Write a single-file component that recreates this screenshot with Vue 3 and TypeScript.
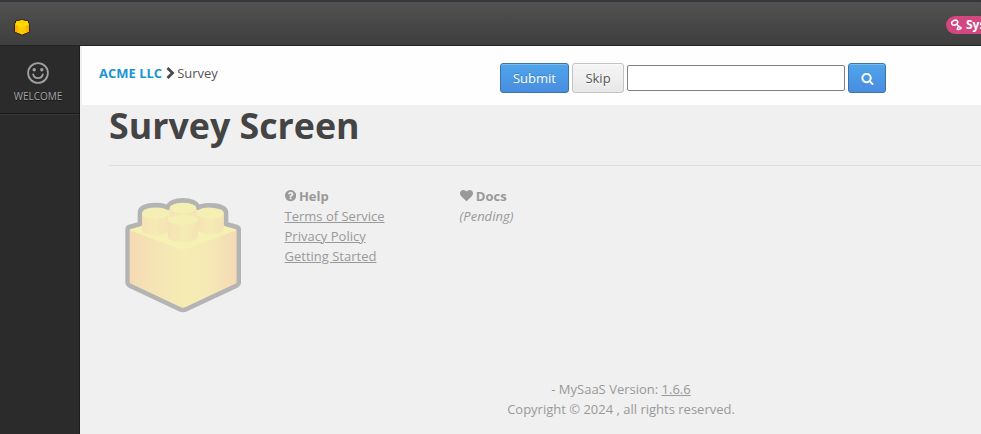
<script setup lang="ts">
import { ref } from 'vue'

const query = ref('')
const helpLinks: string[] = ['Terms of Service', 'Privacy Policy', 'Getting Started']
const studs: number[][] = [
  [219, 69, 40, 32],
  [135, 86, 39, 50],
  [302, 86, 39, 46],
  [219, 105, 45, 51],
]
</script>

<template>
  <div class="app">
    <header class="topbar">
      <svg class="logo" viewBox="0 0 16 17">
        <path d="M.5 4.500 1.500 4V1.800L5 1.200 8 .6l3 .6 3.500.6V4l1 .5v8.300L8 16.200.5 12.800Z" fill="#ffc800" stroke="#2b2516" stroke-width="1" />
        <path d="M1 5 8 8.400 15 5l-2-1-5 1.800L3 4Z" fill="#ffe400" />
        <path d="M1 5.500 4 7v7L1 12.500Z" fill="#ffb000" />
        <path d="m15 5.500-3 1.500v7l3-1.500Z" fill="#ffb000" />
        <path d="M2.200 2.500h3.300v3H2.200ZM6.300 4h3.400v3H6.300ZM10.500 2.500h3.300v3h-3.300ZM6.700 1.300h2.600v1.800H6.700Z" fill="#ffd900" />
      </svg>
      <div class="badge">
        <svg viewBox="0 0 12 12">
          <ellipse cx="3.700" cy="3.700" rx="3.100" ry="2.300" transform="rotate(-25 3.700 3.700)" />
          <path d="m5.500 5.300 5.300 4.200M7.500 7 6.300 10.200l1.600.7M9.500 8.500l-.8 2.200" />
        </svg>
        <span>Sys</span>
      </div>
    </header>
    <div class="body">
      <nav class="sidebar">
        <a class="nav-item">
          <svg viewBox="0 0 22 22">
            <circle class="line" cx="11" cy="11" r="9.900" />
            <circle cx="7.200" cy="7.800" r="1.700" />
            <circle cx="14.800" cy="7.800" r="1.700" />
            <path class="line" d="M6.200 12.500c1 4.700 8.600 4.700 9.600 0" />
          </svg>
          <span>WELCOME</span>
        </a>
      </nav>
      <main class="content">
        <div class="toolbar">
          <div class="crumbs">
            <a>ACME LLC</a>
            <svg viewBox="0 0 9 12"><path d="m1.500 1 5 5-5 5" /></svg>
            <span>Survey</span>
          </div>
          <form class="actions" @submit.prevent>
            <button class="btn primary">Submit</button>
            <button class="btn" type="button">Skip</button>
            <input v-model="query" type="text" />
            <button class="btn primary search" type="button" aria-label="Search">
              <svg viewBox="0 0 1792 1792"><path d="M1216 832q0-185-131.500-316.500t-316.500-131.500-316.500 131.500-131.500 316.500 131.500 316.500 316.500 131.500 316.500-131.500 131.500-316.500zm512 832q0 52-38 90t-90 38q-54 0-90-38l-343-342q-179 124-399 124-143 0-273.500-55.500t-225-150-150-225-55.500-273.500 55.500-273.500 150-225 225-150 273.500-55.500 273.500 55.500 225 150 150 225 55.500 273.500q0 220-124 399l343 343q37 37 37 90z" /></svg>
            </button>
          </form>
        </div>
        <h1>Survey Screen</h1>
        <div class="columns">
          <svg class="brick" viewBox="45 36 348 348">
            <defs>
              <linearGradient id="side" x1="0" x2="1">
                <stop offset="0" stop-color="#f5dab4" />
                <stop offset=".3" stop-color="#f5e6b5" />
                <stop offset=".5" stop-color="#f5ecb3" />
                <stop offset=".75" stop-color="#f5e8b5" />
                <stop offset="1" stop-color="#f5dab6" />
              </linearGradient>
              <linearGradient id="stud" x1="0" x2="1">
                <stop offset="0" stop-color="#f5e2b4" />
                <stop offset=".5" stop-color="#f5ebb4" />
                <stop offset="1" stop-color="#f5e2b4" />
              </linearGradient>
            </defs>
            <path d="M53 133q0-5 5-7l32-9V83c0-25 62-28 85-15 0-29 88-29 88 0 23-13 85-8 85 15v34l32 9q6 2 6 7v160q0 5-5 8l-151 71q-11 6-22 0L58 301q-5-3-5-8Z" fill="#f5ecb4" stroke="#b4b4b4" stroke-width="14" stroke-linejoin="round" />
            <path d="M59 136 219 188l160-52v157L228 363q-9 5-18 0L59 293Z" fill="url(#side)" />
            <path d="m59 136 40-13h240l40 13-148 55q-12 5-24 0Z" fill="#f4f1b3" />
            <g v-for="(s, i) in studs" :key="i">
              <path :d="`M${s[0] - s[2]} ${s[1]}v${s[3]}a${s[2]} 15 0 0 0 ${s[2] * 2} 0v${-s[3]}Z`" fill="url(#stud)" />
              <ellipse :cx="s[0]" :cy="s[1]" :rx="s[2]" ry="15" fill="#f4f0b4" />
            </g>
          </svg>
          <section class="help">
            <strong>
              <svg viewBox="128 128 1536 1536"><path d="M1024 1376v-192q0-14-9-23t-23-9h-192q-14 0-23 9t-9 23v192q0 14 9 23t23 9h192q14 0 23-9t9-23zm256-672q0-88-55.500-163t-138.500-116-170-41q-243 0-371 213-15 24 8 42l132 100q7 6 19 6 16 0 25-12 53-68 86-92 34-24 86-24 48 0 85.500 26t37.500 59q0 38-20 61t-68 45q-63 28-115.500 86.500t-52.500 125.500v36q0 14 9 23t23 9h192q14 0 23-9t9-23q0-19 21.500-49.500t54.500-49.500q32-18 49-28.500t46-35 44.500-48 28-60.500 12.500-81zm384 192q0 209-103 385.500t-279.500 279.500-385.500 103-385.500-103-279.500-279.500-103-385.500 103-385.500 279.500-279.500 385.500-103 385.500 103 279.500 279.500 103 385.500z" /></svg>
              Help
            </strong>
            <a v-for="link in helpLinks" :key="link">{{ link }}</a>
          </section>
          <section>
            <strong>
              <svg class="heart" viewBox="0 128 1792 1536"><path d="M896 1664q-26 0-44-18l-624-602q-10-8-27.500-26t-55.500-65.500-68-97.500-53.500-121-23.500-138q0-220 127-344t351-124q62 0 126.500 21.500t120 58 95.500 68.500 76 68q36-36 76-68t95.500-68.500 120-58 126.500-21.500q224 0 351 124t127 344q0 221-229 450l-623 600q-18 18-44 18z" /></svg>
              Docs
            </strong>
            <em>(Pending)</em>
          </section>
        </div>
        <footer>
          <div>- MySaaS Version: <a>1.6.6</a></div>
          <div>Copyright © 2024 , all rights reserved.</div>
        </footer>
      </main>
    </div>
  </div>
</template>

<style>
body {
  overflow: hidden;
}
</style>

<style scoped>
* {
  box-sizing: border-box;
}
.app {
  height: 434px;
  width: 981px;
  overflow: hidden;
  display: flex;
  flex-direction: column;
  font: 13px/20px 'Open Sans', sans-serif;
  color: #444;
  background: #f0f0f0;
}
.topbar {
  height: 46px;
  flex: none;
  display: flex;
  justify-content: space-between;
  padding-left: 14px;
  border-top: 2px solid #35363b;
  border-bottom: 1px solid #242424;
  background: linear-gradient(#515151, #3e3e3e);
  overflow: hidden;
}
.logo {
  width: 16px;
  height: 17px;
  margin-top: 17px;
}
.badge {
  width: 35px;
  height: 18px;
  margin-top: 14px;
  padding-left: 5px;
  display: flex;
  align-items: center;
  gap: 3px;
  flex: none;
  overflow: hidden;
  white-space: nowrap;
  border-radius: 9px 0 0 9px;
  background: #d2477f;
  color: #fff;
  font-weight: 700;
  font-size: 12px;
}
.badge svg {
  width: 12px;
  height: 12px;
  flex: none;
  fill: none;
  stroke: #fff;
  stroke-width: 1.5;
}
.body {
  flex: 1;
  display: flex;
  min-height: 0;
}
.sidebar {
  width: 80px;
  flex: none;
  background: #2b2b2b;
  border-right: 1px solid #1c1c1c;
}
.nav-item {
  height: 68px;
  padding-top: 16px;
  display: flex;
  flex-direction: column;
  align-items: center;
  padding-right: 3px;
  color: #a5a5a5;
  font-size: 10px;
  line-height: 14px;
  border-bottom: 1px solid #1a1a1a;
  box-shadow: 0 1px #363636;
  text-shadow: 0 1px #111;
}
.nav-item svg {
  width: 22px;
  height: 22px;
  margin-bottom: 5px;
  fill: #a0a0a0;
}
.nav-item .line {
  fill: none;
  stroke: #a0a0a0;
  stroke-width: 1.8;
  stroke-linecap: round;
}
.content {
  flex: 1;
  min-width: 0;
  display: flex;
  flex-direction: column;
}
.toolbar {
  height: 59px;
  flex: none;
  margin-left: 2px;
  padding: 17px 0 0 17px;
  display: flex;
  background: #fefefe;
}
.crumbs {
  width: 401px;
  display: flex;
  align-items: center;
  height: 20px;
  color: #555;
}
.crumbs a {
  color: #1a94d4;
  font-weight: 700;
}
.crumbs svg {
  width: 9px;
  height: 12px;
  margin: 0 2.500px 0 3.500px;
  fill: none;
  stroke: #4a4a4a;
  stroke-width: 2.8;
}
.actions {
  display: flex;
  gap: 3px;
}
.btn {
  height: 30px;
  width: 52px;
  padding: 0;
  border: 1px solid #c4c4c4;
  border-radius: 3px;
  background: linear-gradient(#f5f5f5, #e8e8e8);
  box-shadow: inset 0 1px #fafafa;
  color: #555;
  font: inherit;
  text-shadow: 0 1px #fff;
}
.btn.primary {
  width: 69px;
  border-color: #3f72a6;
  background: linear-gradient(#4ea5ea, #4a8de0);
  box-shadow: inset 0 1px #7bbcf0;
  color: #fff;
  text-shadow: 0 -1px #3d7fc4;
}
.btn.search {
  width: 38px;
  display: flex;
  align-items: center;
  justify-content: center;
}
.search svg {
  width: 13px;
  height: 13px;
  fill: #fff;
}
.actions input {
  width: 218px;
  height: 26px;
  margin-top: 2px;
  padding: 2px 4px;
  border: 1px solid #808080;
  border-radius: 2px;
  background: #fff;
  font: inherit;
}
h1 {
  height: 61px;
  flex: none;
  margin: 0 0 0 29px;
  font-size: 35.750px;
  line-height: 40px;
  border-bottom: 1px solid #dedede;
}
.columns {
  display: flex;
  margin-left: 45px;
  padding-top: 20px;
  color: #999;
}
.brick {
  width: 116px;
  height: 116px;
  margin: 11px 43.500px 0 0;
}
section {
  display: flex;
  flex-direction: column;
  align-items: flex-start;
}
.help {
  width: 175.100px;
}
strong {
  display: flex;
  align-items: center;
  gap: 3.200px;
}
strong svg {
  width: 11.200px;
  height: 11.200px;
  fill: #999;
}
strong .heart {
  width: 13px;
}
a {
  text-decoration: underline;
}
.crumbs a,
.nav-item {
  text-decoration: none;
}
footer {
  width: 1082px;
  margin-top: auto;
  padding-bottom: 15px;
  text-align: center;
  align-self: flex-start;
  color: #999;
}
</style>
